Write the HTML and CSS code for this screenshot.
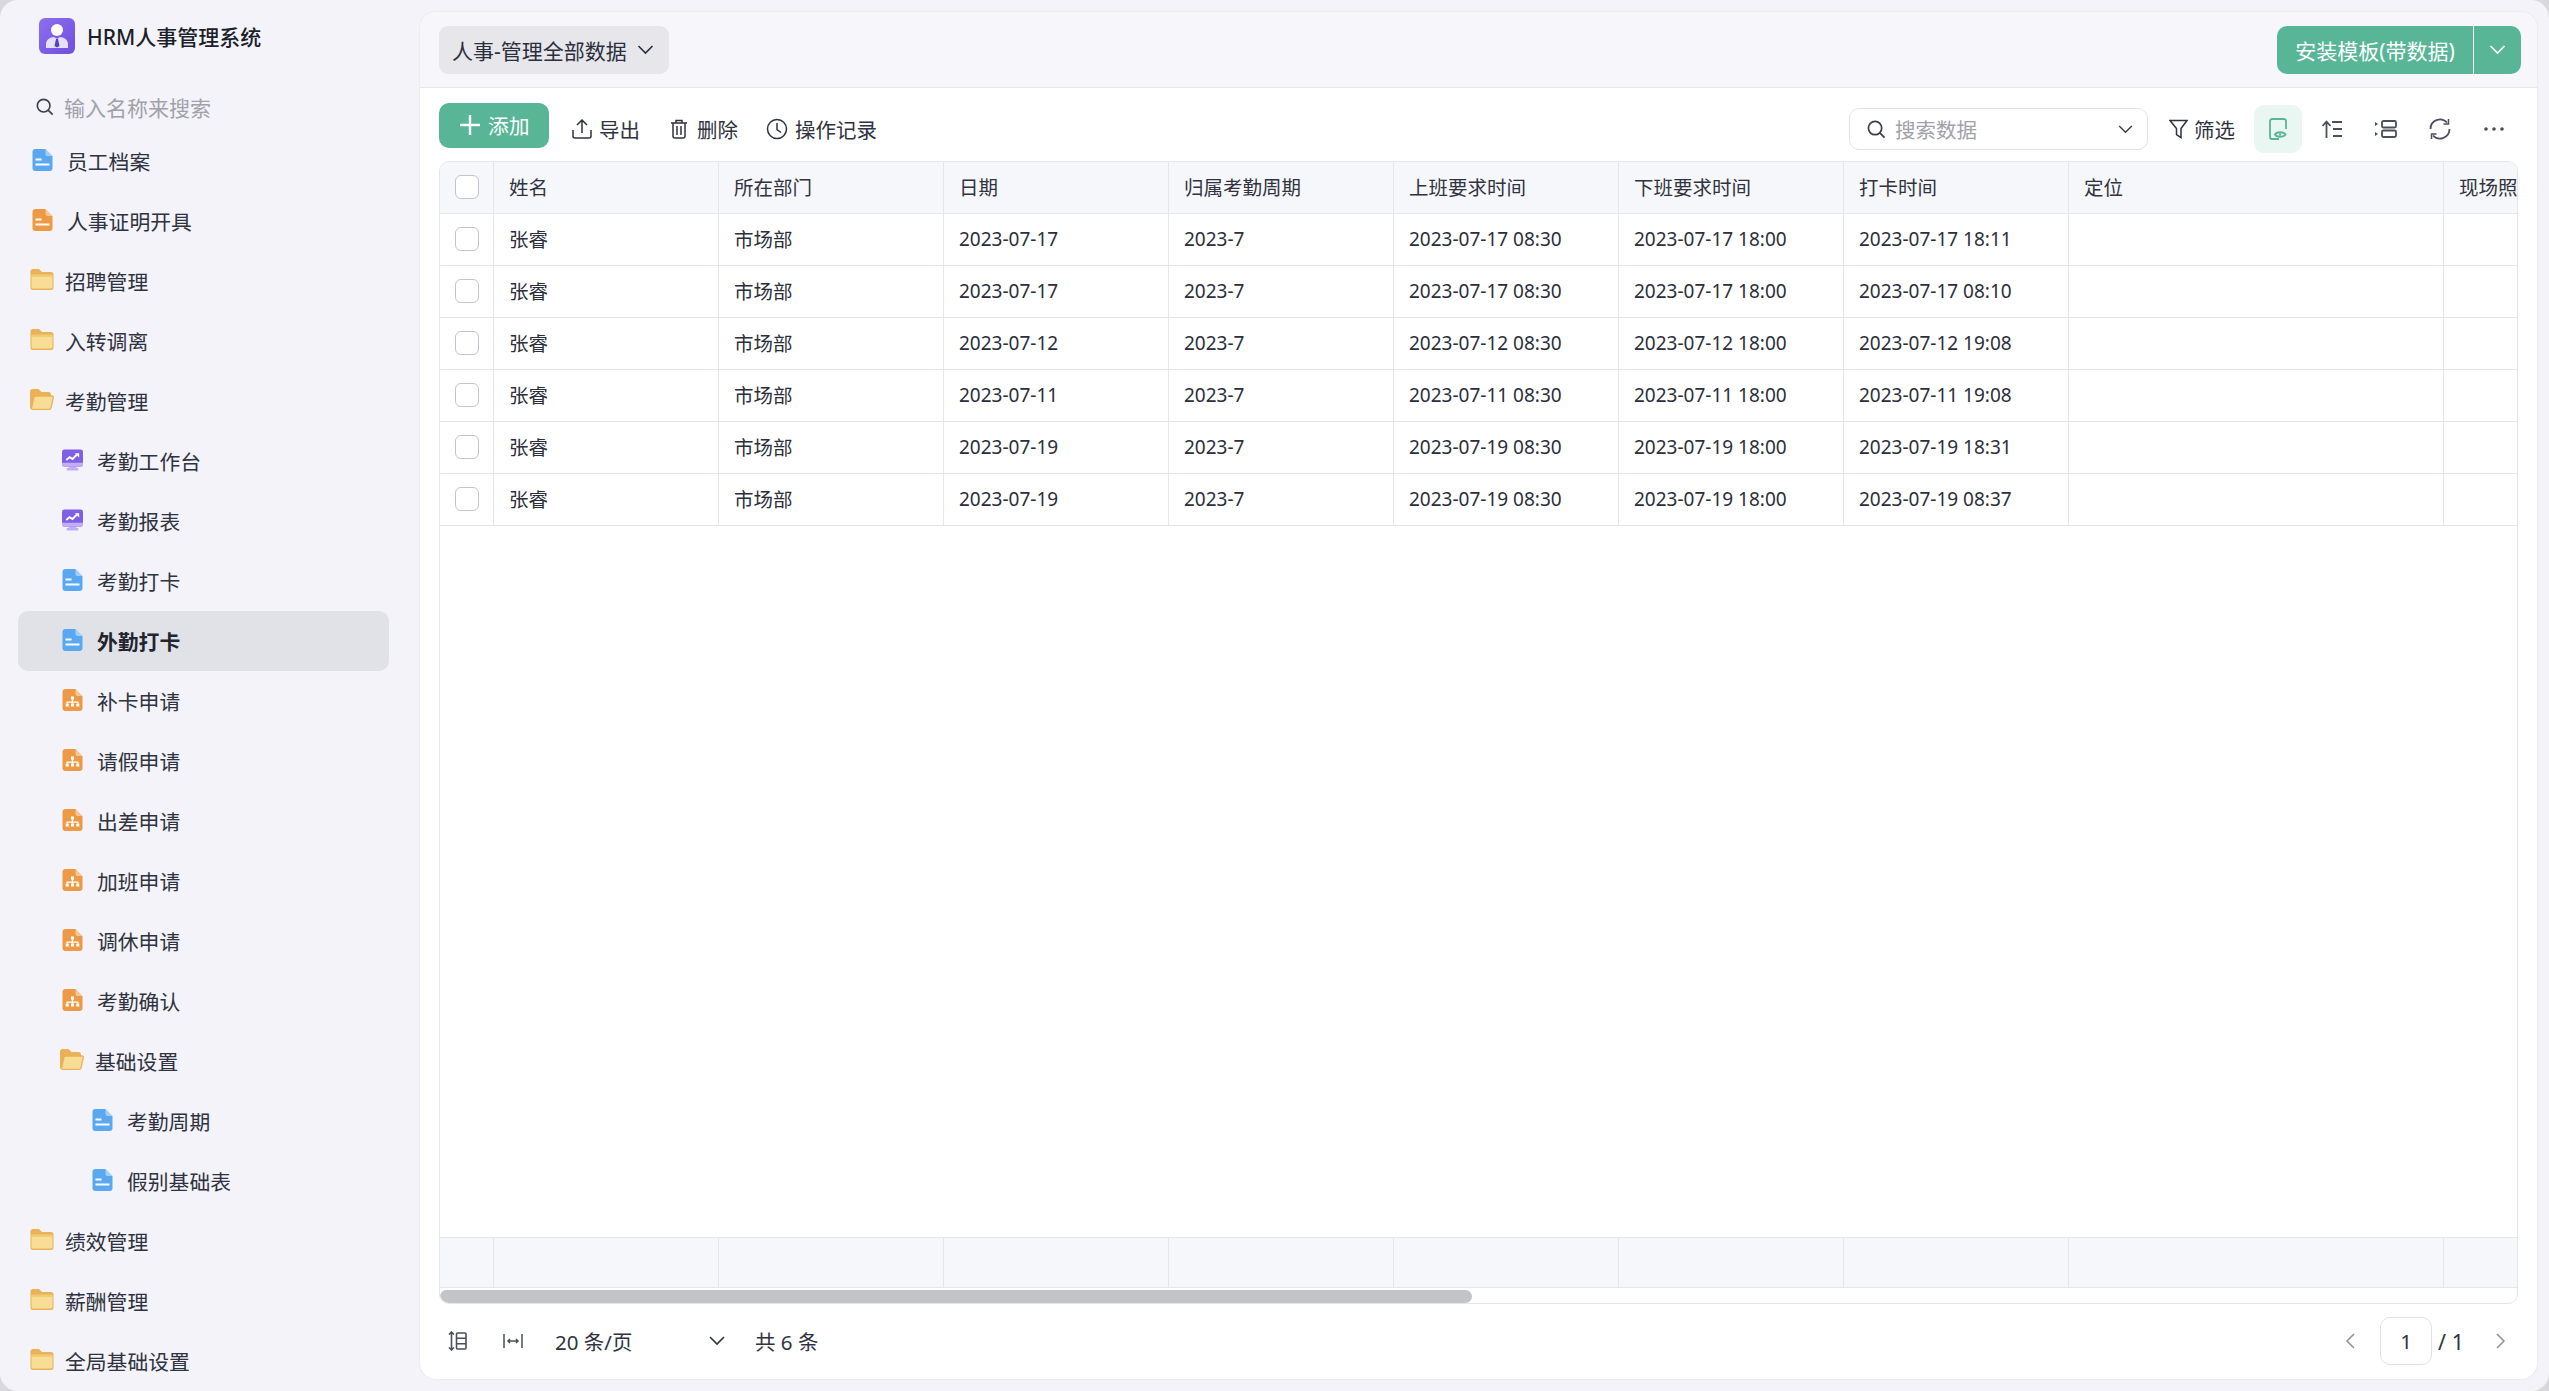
FILE: index.html
```html
<!DOCTYPE html>
<html lang="zh-CN">
<head>
  <meta charset="UTF-8">
  <meta name="viewport" content="width=device-width, initial-scale=1.0">
  <title>HRM人事管理系统</title>
  <link rel="stylesheet" href="styles.css">
</head>
<body>
  <svg class="defs" width="0" height="0">
    <symbol id="doc" viewBox="0 0 20 22">
      <path fill="currentColor" d="M3 0h10l7 7v12a3 3 0 0 1-3 3H3a3 3 0 0 1-3-3V3a3 3 0 0 1 3-3z"/>
      <path fill="#fff" opacity=".45" d="M13 0l7 7h-5a2 2 0 0 1-2-2z"/>
      <path fill="#fff" d="M3 9.500h6v2H3zM3 14.500h14v2H3z"/>
    </symbol>
    <symbol id="org" viewBox="0 0 20 22">
      <path fill="#ec9a45" d="M3 0h10l7 7v12a3 3 0 0 1-3 3H3a3 3 0 0 1-3-3V3a3 3 0 0 1 3-3z"/>
      <path fill="#fff" opacity=".45" d="M13 0l7 7h-5a2 2 0 0 1-2-2z"/>
      <path fill="#fff" d="M8.500 7.500h3v3h-3zM9.300 10.500h1.400v2H16v2h-1.300v-.7H10.700v.7H9.300v-.7H5.300v.7H4v-2h5.300z"/>
      <path fill="#fff" d="M3.200 14.500h3v3h-3zM8.500 14.500h3v3h-3zM13.800 14.500h3v3h-3z"/>
    </symbol>
    <symbol id="screen" viewBox="0 0 22 22">
      <path fill="#c3adf7" d="M7 17h8v3H7zM5 19.500h12V22H5z"/>
      <rect width="22" height="18" rx="2.500" fill="#7f5fe6"/>
      <path fill="#c3adf7" d="M0 14h22v1.500a2.500 2.500 0 0 1-2.500 2.500h-17A2.500 2.500 0 0 1 0 15.500z"/>
      <path fill="none" stroke="#fff" stroke-width="2" d="M4.500 11l3.500-3 3 2 5-5"/>
      <path fill="#fff" d="M13.500 4h4.500v4.500z"/>
    </symbol>
    <symbol id="folder" viewBox="0 0 23 21">
      <path fill="#e9b257" d="M2.500 0h6l3 3h9a2.500 2.500 0 0 1 2.500 2.500v13a2.500 2.500 0 0 1-2.500 2.500h-18A2.500 2.500 0 0 1 0 18.500v-16A2.500 2.500 0 0 1 2.500 0z"/>
      <path fill="#f8dd96" d="M2 6h19a1 1 0 0 1 1 1v11a1.500 1.500 0 0 1-1.500 1.500h-18A1.500 1.500 0 0 1 1 18V7a1 1 0 0 1 1-1z"/>
      <path fill="#f1ca78" d="M1 5.500h21V8H1z"/>
    </symbol>
    <symbol id="folder-open" viewBox="0 0 24 21">
      <path fill="#e9b257" d="M2.500 0h6l3 3h7a2.500 2.500 0 0 1 2.500 2.500V8H5L2 20.500A2.500 2.500 0 0 1 0 18.500v-16A2.500 2.500 0 0 1 2.500 0z"/>
      <path fill="#f8dd96" stroke="#e9b257" stroke-width="1.300" d="M5.500 7h16.500a1.300 1.300 0 0 1 1.300 1.600l-2.200 9.800a2 2 0 0 1-2 1.900H2.500a1 1 0 0 1-1-1.300L4 8.200A1.500 1.500 0 0 1 5.500 7z"/>
    </symbol>
    <symbol id="chev" viewBox="0 0 16 10">
      <path fill="none" stroke="currentColor" stroke-width="1.600" d="M1 1l7 7 7-7"/>
    </symbol>
    <symbol id="search" viewBox="0 0 20 20">
      <circle cx="8.500" cy="8.500" r="7" fill="none" stroke="currentColor" stroke-width="1.800"/>
      <path stroke="currentColor" stroke-width="1.800" d="M13.500 13.500l5 5"/>
    </symbol>
  </svg>

  <div class="app">
    <aside class="sidebar">
      <div class="brand">
        <span class="logo">
          <svg width="24" height="26" viewBox="0 0 24 26">
            <circle cx="12" cy="7" r="6" fill="#fff"/>
            <path fill="#e6defa" d="M1 25v-4c0-4 4-7 8-7l3 2 3-2c4 0 8 3 8 7v4z"/>
            <path fill="#5a3fc0" d="M11 16h2l1.500 7-2.500 1.500L9.500 23z"/>
          </svg>
        </span>
        <span class="brand-name">HRM人事管理系统</span>
      </div>
      <div class="side-search">
        <svg class="side-search-icon" width="18" height="18"><use href="#search"/></svg>
        <span>输入名称来搜索</span>
      </div>
      <nav class="menu">
        <a class="item"><svg class="ic ic-blue"><use href="#doc"/></svg>员工档案</a>
        <a class="item"><svg class="ic ic-orange"><use href="#doc"/></svg>人事证明开具</a>
        <a class="item"><svg class="ic-f"><use href="#folder"/></svg>招聘管理</a>
        <a class="item"><svg class="ic-f"><use href="#folder"/></svg>入转调离</a>
        <a class="item"><svg class="ic-f"><use href="#folder-open"/></svg>考勤管理</a>
        <a class="item lv1"><svg class="ic"><use href="#screen"/></svg>考勤工作台</a>
        <a class="item lv1"><svg class="ic"><use href="#screen"/></svg>考勤报表</a>
        <a class="item lv1"><svg class="ic ic-blue"><use href="#doc"/></svg>考勤打卡</a>
        <a class="item lv1 active"><svg class="ic ic-blue"><use href="#doc"/></svg>外勤打卡</a>
        <a class="item lv1"><svg class="ic"><use href="#org"/></svg>补卡申请</a>
        <a class="item lv1"><svg class="ic"><use href="#org"/></svg>请假申请</a>
        <a class="item lv1"><svg class="ic"><use href="#org"/></svg>出差申请</a>
        <a class="item lv1"><svg class="ic"><use href="#org"/></svg>加班申请</a>
        <a class="item lv1"><svg class="ic"><use href="#org"/></svg>调休申请</a>
        <a class="item lv1"><svg class="ic"><use href="#org"/></svg>考勤确认</a>
        <a class="item lv1"><svg class="ic-f"><use href="#folder-open"/></svg>基础设置</a>
        <a class="item lv2"><svg class="ic ic-blue"><use href="#doc"/></svg>考勤周期</a>
        <a class="item lv2"><svg class="ic ic-blue"><use href="#doc"/></svg>假别基础表</a>
        <a class="item"><svg class="ic-f"><use href="#folder"/></svg>绩效管理</a>
        <a class="item"><svg class="ic-f"><use href="#folder"/></svg>薪酬管理</a>
        <a class="item"><svg class="ic-f"><use href="#folder"/></svg>全局基础设置</a>
      </nav>
    </aside>

    <main class="card">
      <header class="card-head">
        <button class="view-select">人事-管理全部数据<svg width="17" height="10"><use href="#chev"/></svg></button>
        <div class="install">
          <span class="install-text">安装模板(带数据)</span>
          <span class="install-more"><svg width="17" height="10"><use href="#chev"/></svg></span>
        </div>
      </header>

      <div class="toolbar">
        <button class="add-btn">
          <svg width="20" height="20" viewBox="0 0 20 20"><path stroke="#fff" stroke-width="2.400" d="M10 0v20M0 10h20"/></svg>
          添加
        </button>
        <span class="tool tool-export">
          <svg width="20" height="20" viewBox="0 0 20 20" fill="none" stroke="currentColor" stroke-width="1.500"><path d="M1 11v6a2 2 0 0 0 2 2h14a2 2 0 0 0 2-2v-6M10 14V1.500M5 6l5-5 5 5"/></svg>
          导出
        </span>
        <span class="tool tool-delete">
          <svg width="18" height="20" viewBox="0 0 18 20" fill="none" stroke="currentColor" stroke-width="1.500"><path d="M1 4h16M6 4V1.500h6V4M3 4v13a2 2 0 0 0 2 2h8a2 2 0 0 0 2-2V4M7 7v9M11 7v9"/></svg>
          删除
        </span>
        <span class="tool">
          <svg width="22" height="22" viewBox="0 0 22 22" fill="none" stroke="currentColor" stroke-width="1.500"><circle cx="11" cy="11" r="9.500"/><path d="M11 5v6.500l4 3"/></svg>
          操作记录
        </span>

        <div class="tools-right">
          <div class="data-search">
            <svg class="data-search-icon" width="19" height="19"><use href="#search"/></svg>
            <span class="data-search-text">搜索数据</span>
            <svg class="data-search-chev" width="15" height="9"><use href="#chev"/></svg>
          </div>
          <span class="tool tool-filter">
            <svg width="19" height="20" viewBox="0 0 19 20" fill="none" stroke="currentColor" stroke-width="1.500"><path d="M1 1.500h17l-6 8v9l-4.500-3V9.500z"/></svg>
            筛选
          </span>
          <span class="icon-btn icon-btn-on">
            <svg width="20" height="22" viewBox="0 0 20 22" fill="none" stroke="#58b697" stroke-width="1.800"><path d="M18 11V3a2 2 0 0 0-2-2H4a2 2 0 0 0-2 2v16a2 2 0 0 0 2 2h7"/><path d="M7 16.500c1.500-3 8.500-3 10.500 0-2 3-9 3-10.500 0z" fill="#fff"/><circle cx="12" cy="16.500" r="1.200" fill="#58b697" stroke="none"/></svg>
          </span>
          <span class="icon-btn">
            <svg width="20" height="18" viewBox="0 0 20 18" fill="none" stroke="currentColor" stroke-width="1.800"><path d="M4.500 18V2M.5 6l4-4.500 4 4.500M10 2h10M11 9h9M11 16h9"/></svg>
          </span>
          <span class="icon-btn">
            <svg width="22" height="18" viewBox="0 0 22 18" fill="none" stroke="currentColor" stroke-width="1.800"><rect x="7" y="1" width="14" height="6.500" rx="1.500"/><rect x="7" y="10.500" width="14" height="6.500" rx="1.500"/><path d="M0 2l3 2-3 2zM0 12l3 2-3 2z" fill="currentColor" stroke="none"/></svg>
          </span>
          <span class="icon-btn">
            <svg width="22" height="22" viewBox="0 0 22 22" fill="none" stroke="currentColor" stroke-width="1.800"><path d="M1.500 11A9.500 9.500 0 0 1 18 4.500M20.500 11A9.500 9.500 0 0 1 4 17.500"/><path d="M19.500 1v5h-5M2.500 21v-5h5" stroke-width="1.500"/></svg>
          </span>
          <span class="icon-btn">
            <svg width="20" height="4" viewBox="0 0 20 4" fill="currentColor"><circle cx="2" cy="2" r="1.800"/><circle cx="10" cy="2" r="1.800"/><circle cx="18" cy="2" r="1.800"/></svg>
          </span>
        </div>
      </div>

      <div class="grid-wrap">
        <table class="grid">
          <colgroup><col class="c-check"><col class="c-std"><col class="c-std"><col class="c-std"><col class="c-std"><col class="c-std"><col class="c-std"><col class="c-std"><col class="c-wide"><col class="c-last"></colgroup>
          <thead>
            <tr><th><span class="check"></span></th><th>姓名</th><th>所在部门</th><th>日期</th><th>归属考勤周期</th><th>上班要求时间</th><th>下班要求时间</th><th>打卡时间</th><th>定位</th><th>现场照</th></tr>
          </thead>
          <tbody>
            <tr><td><span class="check"></span></td><td>张睿</td><td>市场部</td><td>2023-07-17</td><td>2023-7</td><td>2023-07-17 08:30</td><td>2023-07-17 18:00</td><td>2023-07-17 18:11</td><td></td><td></td></tr>
            <tr><td><span class="check"></span></td><td>张睿</td><td>市场部</td><td>2023-07-17</td><td>2023-7</td><td>2023-07-17 08:30</td><td>2023-07-17 18:00</td><td>2023-07-17 08:10</td><td></td><td></td></tr>
            <tr><td><span class="check"></span></td><td>张睿</td><td>市场部</td><td>2023-07-12</td><td>2023-7</td><td>2023-07-12 08:30</td><td>2023-07-12 18:00</td><td>2023-07-12 19:08</td><td></td><td></td></tr>
            <tr><td><span class="check"></span></td><td>张睿</td><td>市场部</td><td>2023-07-11</td><td>2023-7</td><td>2023-07-11 08:30</td><td>2023-07-11 18:00</td><td>2023-07-11 19:08</td><td></td><td></td></tr>
            <tr><td><span class="check"></span></td><td>张睿</td><td>市场部</td><td>2023-07-19</td><td>2023-7</td><td>2023-07-19 08:30</td><td>2023-07-19 18:00</td><td>2023-07-19 18:31</td><td></td><td></td></tr>
            <tr><td><span class="check"></span></td><td>张睿</td><td>市场部</td><td>2023-07-19</td><td>2023-7</td><td>2023-07-19 08:30</td><td>2023-07-19 18:00</td><td>2023-07-19 08:37</td><td></td><td></td></tr>
          </tbody>
        </table>
        <div class="grid-space"></div>
        <table class="grid grid-sum">
          <colgroup><col class="c-check"><col class="c-std"><col class="c-std"><col class="c-std"><col class="c-std"><col class="c-std"><col class="c-std"><col class="c-std"><col class="c-wide"><col class="c-last"></colgroup>
          <tr><td></td><td></td><td></td><td></td><td></td><td></td><td></td><td></td><td></td><td></td></tr>
        </table>
        <div class="scroll-track"><div class="scroll-thumb"></div></div>
      </div>

      <footer class="pager">
        <svg class="pager-icon" width="19" height="20" viewBox="0 0 19 20" fill="none" stroke="currentColor" stroke-width="1.600"><path d="M3.500 1v18M1 3.500L3.500 1 6 3.500M1 16.500L3.500 19 6 16.500"/><rect x="8.500" y="2" width="9.500" height="16" rx="1"/><path d="M8.500 7.300H18M8.500 12.700H18"/></svg>
        <svg class="pager-icon pager-icon-w" width="20" height="14" viewBox="0 0 20 14" fill="none" stroke="currentColor" stroke-width="1.500"><path d="M1 0v14M19 0v14M5 7h10M7 5L5 7l2 2M13 5l2 2-2 2"/></svg>
        <span class="page-size">20 条/页</span>
        <svg class="page-size-chev" width="16" height="10"><use href="#chev"/></svg>
        <span class="total">共 6 条</span>
        <div class="pages">
          <svg width="10" height="16" viewBox="0 0 10 16" fill="none" stroke="#8d8f99" stroke-width="1.500"><path d="M9 1L2 8l7 7"/></svg>
          <span class="page-input">1</span>
          <span class="page-count">/ 1</span>
          <svg class="page-next" width="10" height="16" viewBox="0 0 10 16" fill="none" stroke="#8d8f99" stroke-width="1.500"><path d="M1 1l7 7-7 7"/></svg>
        </div>
      </footer>
    </main>
  </div>
</body>
</html>
```

FILE: styles.css
```css
html {
  background: #d9d9dc;
}
body {
  margin: 0;
  height: 100vh;
  overflow: hidden;
  font-family: "Noto Sans", "Noto Sans CJK SC", sans-serif;
  color: #2b2e3b;
}
.defs {
  position: absolute;
}
button {
  font: inherit;
  color: inherit;
  border: none;
}
.app {
  display: flex;
  height: 100vh;
  background: #f3f3f9;
  border-radius: 18px;
  overflow: hidden;
}

/* sidebar */
.sidebar {
  width: 420px;
  flex: none;
}
.brand {
  display: flex;
  align-items: center;
  height: 36px;
  padding: 18px 0 0 39px;
}
.logo {
  display: flex;
  align-items: center;
  justify-content: center;
  width: 36px;
  height: 36px;
  border-radius: 6px;
  background: linear-gradient(135deg, #8e6ef0, #6f4fdc);
}
.brand-name {
  margin-left: 12px;
  font-size: 21px;
  font-weight: 500;
  color: #1b1e2b;
}
.side-search {
  display: flex;
  align-items: center;
  height: 32px;
  margin-top: 37px;
  padding-left: 36px;
  font-size: 21px;
  color: #a0a1a9;
}
.side-search-icon {
  color: #3c3f4b;
  margin-right: 10px;
}
.menu {
  padding: 0 31px 0 18px;
  margin-top: 8px;
}
.item {
  display: flex;
  align-items: center;
  height: 60px;
  padding-left: 14px;
  font-size: 20.800px;
  color: #2f3240;
  border-radius: 10px;
  white-space: nowrap;
}
.lv1 {
  padding-left: 44px;
}
.lv2 {
  padding-left: 74px;
}
.active {
  background: #e1e2e7;
  font-weight: 700;
  color: #22242f;
}
.ic {
  width: 21px;
  height: 22px;
  margin-right: 14px;
  margin-top: -2px;
}
.ic-blue {
  color: #5ba8f2;
}
.ic-orange {
  color: #ee9a45;
}
.ic-f {
  width: 24px;
  height: 21px;
  margin: -3px 11px 0 -2px;
}

/* main card */
.card {
  flex: 1;
  display: flex;
  flex-direction: column;
  margin: 12px 12px 12px 0;
  background: #fff;
  border-radius: 16px;
  box-shadow: 0 0 2px rgba(40, 40, 80, 0.12);
  overflow: hidden;
  min-width: 0;
}
.card-head {
  display: flex;
  align-items: center;
  justify-content: space-between;
  height: 75px;
  padding: 0 16px 0 19px;
  background: #f6f6fb;
  border-bottom: 1px solid #e5e6ec;
  flex: none;
}
.view-select {
  display: flex;
  align-items: center;
  gap: 10px;
  height: 48px;
  padding: 0 15px 0 13px;
  font-size: 21px;
  background: #e6e6eb;
  border-radius: 9px;
}
.install {
  display: flex;
  height: 48px;
  color: #fff;
  background: #58b697;
  border-radius: 10px;
  font-size: 21px;
  overflow: hidden;
}
.install-text {
  display: flex;
  align-items: center;
  justify-content: center;
  width: 196px;
  border-right: 1px solid #fff;
}
.install-more {
  display: flex;
  align-items: center;
  justify-content: center;
  width: 47px;
}

/* toolbar */
.toolbar {
  display: flex;
  align-items: center;
  box-sizing: border-box;
  height: 73px;
  padding: 9px 13px 0 19px;
  flex: none;
  font-size: 20.500px;
  color: #30333f;
}
.add-btn {
  display: flex;
  align-items: center;
  gap: 8px;
  width: 110px;
  height: 45px;
  padding: 0 0 2px 21px;
  margin: 0 23px 7px 0;
  font-size: 20.800px;
  color: #fff;
  background: #58b697;
  border-radius: 10px;
}
.tool {
  display: flex;
  align-items: center;
  gap: 7px;
}
.tool-export {
  margin-right: 30px;
}
.tool-delete {
  gap: 9px;
  margin-right: 28px;
}
.tool svg {
  flex: none;
}
.tools-right {
  display: flex;
  align-items: center;
  margin-left: auto;
}
.data-search {
  display: flex;
  align-items: center;
  width: 299px;
  height: 42px;
  box-sizing: border-box;
  padding: 0 14px 0 17px;
  margin-right: 21px;
  border: 1px solid #e0e1e8;
  border-radius: 10px;
  color: #3c3f4b;
}
.data-search-text {
  flex: 1;
  margin-left: 9px;
  color: #a0a1a9;
}
.tool-filter {
  gap: 6px;
  margin-right: 19px;
}
.icon-btn {
  display: flex;
  align-items: center;
  justify-content: center;
  width: 48px;
  height: 48px;
  margin-right: 6px;
  border-radius: 10px;
  color: #4b4e5b;
}
.icon-btn-on {
  background: #e9f6f2;
}

/* table */
.grid-wrap {
  flex: 1;
  display: flex;
  flex-direction: column;
  margin: 0 19px;
  min-height: 0;
  border: 1px solid #e5e6ec;
  border-radius: 10px;
  overflow: hidden;
}
.grid {
  width: 2078px;
  flex: none;
  table-layout: fixed;
  border-collapse: collapse;
  font-size: 19.500px;
}
.c-check {
  width: 53px;
}
.c-std {
  width: 225px;
}
.c-wide {
  width: 375px;
}
.c-last {
  width: 75px;
}
.grid th,
.grid td {
  height: 52px;
  box-sizing: border-box;
  padding: 0 0 2px 15.500px;
  text-align: left;
  font-weight: 400;
  border-right: 1px solid #e5e6ec;
  border-bottom: 1px solid #e5e6ec;
  white-space: nowrap;
}
.grid td:nth-child(n+4) {
  padding-bottom: 0;
  font-size: 19px;
}
.grid th {
  height: 51px;
  background: #f6f7fa;
  color: #30333f;
}
.grid th:last-child,
.grid td:last-child {
  border-right: none;
}
.grid th:first-child,
.grid td:first-child {
  padding: 0 0 0 1px;
  text-align: center;
}
.check {
  display: block;
  width: 24px;
  height: 24px;
  box-sizing: border-box;
  margin: 0 auto;
  background: #fff;
  border: 1px solid #c2c3cc;
  border-radius: 6px;
}
.grid-space {
  flex: 1;
}
.grid-sum td {
  height: 50px;
  background: #f6f7fa;
  border-top: 1px solid #e5e6ec;
}
.scroll-track {
  height: 15px;
  padding-top: 2px;
  box-sizing: border-box;
  flex: none;
}
.scroll-thumb {
  width: 1032px;
  height: 13px;
  background: #c3c4c8;
  border-radius: 7px;
}

/* pager */
.pager {
  display: flex;
  align-items: center;
  box-sizing: border-box;
  height: 75px;
  padding: 0 31px 1px 28px;
  flex: none;
  font-size: 20.500px;
  color: #30333f;
}
.pager-icon {
  color: #4b4e5b;
  flex: none;
}
.pager-icon-w {
  margin-left: 36px;
}
.page-size {
  margin-left: 32px;
  width: 154px;
}
.page-size-chev {
  flex: none;
}
.total {
  margin-left: 30px;
}
.pages {
  display: flex;
  align-items: center;
  margin-left: auto;
}
.page-input {
  display: flex;
  align-items: center;
  justify-content: center;
  width: 52px;
  height: 48px;
  box-sizing: border-box;
  margin-left: 25px;
  border: 1px solid #e0e1e8;
  border-radius: 10px;
}
.page-count {
  margin-left: 6px;
  font-size: 21.500px;
}
.page-next {
  margin-left: 32px;
}
```
